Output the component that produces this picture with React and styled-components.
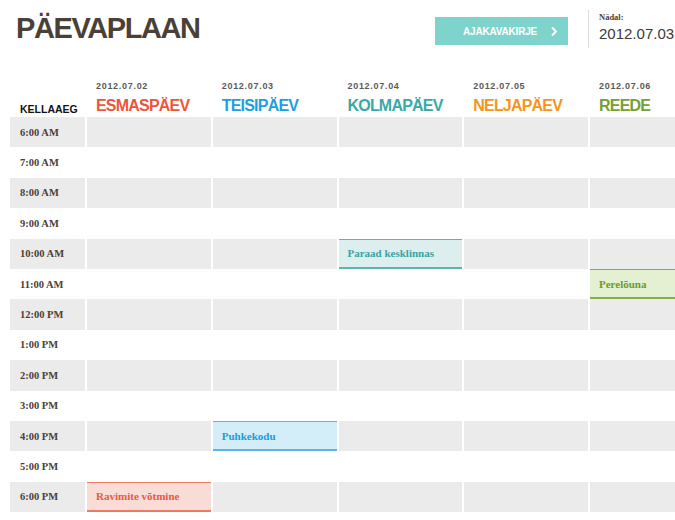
import React from "react";
import styled, { createGlobalStyle } from "styled-components";

const GlobalStyle = createGlobalStyle`
  html, body {
    margin: 0;
    padding: 0;
    background: #ffffff;
    overflow: hidden;
  }
  body {
    font-family: "Liberation Sans", Arial, sans-serif;
  }
`;

const days = [
  { date: "2012.07.02", name: "ESMASPÄEV", color: "#f0553b" },
  { date: "2012.07.03", name: "TEISIPÄEV", color: "#1d9fe0" },
  { date: "2012.07.04", name: "KOLMAPÄEV", color: "#38aaa5" },
  { date: "2012.07.05", name: "NELJAPÄEV", color: "#f7941d" },
  { date: "2012.07.06", name: "REEDE", color: "#74a034" },
];

const times = [
  "6:00 AM",
  "7:00 AM",
  "8:00 AM",
  "9:00 AM",
  "10:00 AM",
  "11:00 AM",
  "12:00 PM",
  "1:00 PM",
  "2:00 PM",
  "3:00 PM",
  "4:00 PM",
  "5:00 PM",
  "6:00 PM",
];

const eventTones = {
  teal: { bg: "#ddeeee", line: "#5fb4b0", text: "#3aa49f" },
  blue: { bg: "#d3edf9", line: "#5cb5e2", text: "#1d9be0" },
  red: { bg: "#fadcd6", line: "#ee7a63", text: "#ea5a3e" },
  green: { bg: "#e3f0d1", line: "#86ad4a", text: "#6e9a2c" },
};

// key: dayIndex-rowIndex
const events = {
  "2-4": { title: "Paraad kesklinnas", tone: "teal" },
  "4-5": { title: "Perelõuna", tone: "green" },
  "1-10": { title: "Puhkekodu", tone: "blue" },
  "0-12": { title: "Ravimite võtmine", tone: "red" },
};

function App() {
  return (
    <Page>
      <GlobalStyle />
      <Header>
        <Title>PÄEVAPLAAN</Title>
        <Right>
          <ScheduleButton>
            AJAKAVAKIRJE
            <svg width="8" height="11" viewBox="0 0 8 11">
              <polyline
                points="2,1.5 6,5.5 2,9.5"
                fill="none"
                stroke="#ffffff"
                strokeWidth="2"
              />
            </svg>
          </ScheduleButton>
          <Divider />
          <Week>
            <WeekLabel>Nädal:</WeekLabel>
            <WeekValue>2012.07.03</WeekValue>
          </Week>
        </Right>
      </Header>
      <Grid>
        <CornerLabel>KELLAAEG</CornerLabel>
        {days.map((d) => (
          <DayHead key={d.date}>
            <DayDate>{d.date}</DayDate>
            <DayName color={d.color}>{d.name}</DayName>
          </DayHead>
        ))}
        {times.map((t, row) => (
          <React.Fragment key={t}>
            <TimeCell shaded={row % 2 === 0}>{t}</TimeCell>
            {days.map((d, col) => {
              const ev = events[`${col}-${row}`];
              if (ev) {
                return (
                  <EventCell key={d.date} tone={eventTones[ev.tone]}>
                    {ev.title}
                  </EventCell>
                );
              }
              return <Slot key={d.date} shaded={row % 2 === 0} />;
            })}
          </React.Fragment>
        ))}
      </Grid>
    </Page>
  );
}

export default App;

const Page = styled.div`
  width: 675px;
  height: 520px;
  overflow: hidden;
`;

const Header = styled.div`
  display: flex;
  align-items: flex-start;
  height: 78px;
  padding-left: 16px;
  box-sizing: border-box;
`;

const Title = styled.h1`
  margin: 14px 0 0;
  font-size: 29px;
  line-height: 29px;
  font-weight: 700;
  letter-spacing: -1.4px;
  color: #4b4037;
`;

const Right = styled.div`
  margin-left: auto;
  display: flex;
  align-items: flex-start;
`;

const ScheduleButton = styled.div`
  margin-top: 17px;
  width: 133px;
  height: 28px;
  background: #7ed3cc;
  color: #ffffff;
  font-size: 10px;
  font-weight: 700;
  letter-spacing: -0.2px;
  display: flex;
  align-items: center;
  justify-content: flex-end;
  gap: 13px;
  padding-right: 10px;
  box-sizing: border-box;
`;

const Divider = styled.div`
  width: 1px;
  height: 38px;
  margin: 10px 10px 0 20px;
  background: #dcdcdc;
`;

const Week = styled.div`
  width: 76px;
  padding-top: 12px;
`;

const WeekLabel = styled.div`
  font-family: "Liberation Serif", serif;
  font-weight: 700;
  font-size: 8.5px;
  color: #4b4037;
  line-height: 10px;
`;

const WeekValue = styled.div`
  margin-top: 3px;
  font-size: 15px;
  line-height: 17px;
  color: #3a3a3a;
  white-space: nowrap;
`;

const Grid = styled.div`
  display: grid;
  grid-template-columns: 75px repeat(5, 123.75px);
  grid-template-rows: 39px repeat(13, 30.4px);
  column-gap: 2px;
  margin-left: 10px;
  width: 720px;
`;

const CornerLabel = styled.div`
  align-self: end;
  padding: 0 0 2px 10px;
  font-size: 10.5px;
  font-weight: 700;
  color: #111111;
  line-height: 12px;
`;

const DayHead = styled.div`
  display: flex;
  flex-direction: column;
  justify-content: flex-end;
  padding: 0 0 3px 9px;
`;

const DayDate = styled.div`
  font-size: 9px;
  font-weight: 700;
  letter-spacing: 0.7px;
  color: #5a5a5a;
  line-height: 11px;
  margin-bottom: 5px;
`;

const DayName = styled.div`
  font-size: 16px;
  font-weight: 700;
  letter-spacing: -0.8px;
  line-height: 17px;
  color: ${({ color }) => color};
  white-space: nowrap;
`;

const TimeCell = styled.div`
  display: flex;
  align-items: center;
  padding-left: 10px;
  font-family: "Liberation Serif", serif;
  font-weight: 700;
  font-size: 10.5px;
  color: #4b4037;
  background: ${({ shaded }) => (shaded ? "#ebebeb" : "transparent")};
`;

const Slot = styled.div`
  background: ${({ shaded }) => (shaded ? "#ebebeb" : "transparent")};
`;

const EventCell = styled.div`
  display: flex;
  align-items: center;
  padding-left: 9px;
  box-sizing: border-box;
  font-family: "Liberation Serif", serif;
  font-weight: 700;
  font-size: 11px;
  background: ${({ tone }) => tone.bg};
  color: ${({ tone }) => tone.text};
  border-top: 1px solid ${({ tone }) => tone.line};
  border-bottom: 2px solid ${({ tone }) => tone.line};
`;
